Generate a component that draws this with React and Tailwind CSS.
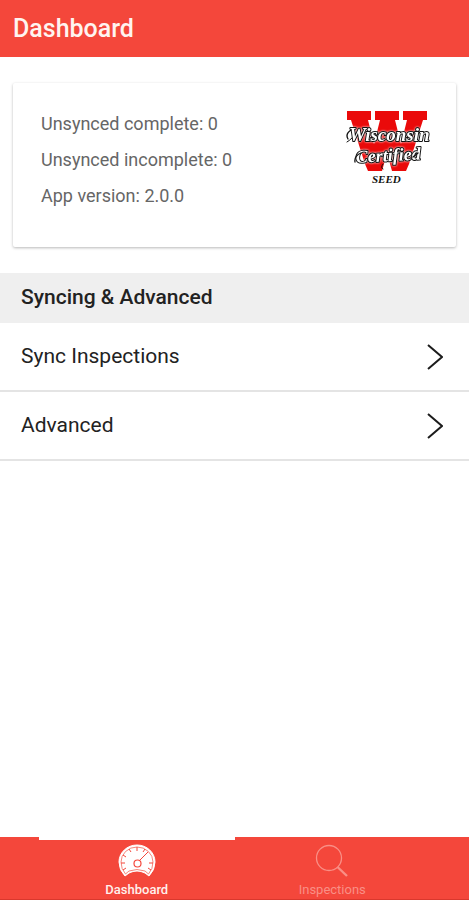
const stats = [
  { label: "Unsynced complete", value: "0" },
  { label: "Unsynced incomplete", value: "0" },
  { label: "App version", value: "2.0.0" },
];

const links = ["Sync Inspections", "Advanced"];

function SeedLogo() {
  return (
    <svg viewBox="0 0 88 76" className="w-[88px] h-[76px] shrink-0" role="img" aria-label="Wisconsin Certified Seed">
      <path
        fill="#ea0a0a"
        d="M2 0H26V9H23L29 33L35 9H30V0H54V9H50L56 33L62 9H58V0H82V9H78L64 53L61 60H47L42 42L37 60H23L20 53L6 9H2Z"
      />
      <g
        className="drop-shadow-[0_0_1px_white]"
        fontFamily="'Liberation Serif', serif"
        fontStyle="italic"
        fontWeight="bold"
        fill="#fff"
        stroke="#111"
        strokeWidth="2"
        strokeLinejoin="round"
        paintOrder="stroke"
      >
        <text x="4" y="30" fontSize="19">Wisconsin</text>
        <text x="11" y="52" fontSize="18" transform="rotate(-3 11 52)">Certified</text>
      </g>
      <g fill="none" strokeLinecap="round">
        <path d="M3 28Q0 23 6 19M10 51Q9 45 16 42M68 46L73 42" stroke="#111" strokeWidth="1.300" />
        <path d="M2 31Q4 30 7 27M38 53Q35 57 38 58" stroke="#111" strokeWidth="1" />
      </g>
      <text x="27" y="72" fontFamily="'Liberation Serif', serif" fontStyle="italic" fontWeight="bold" fontSize="11" fill="#111">
        SEED
      </text>
    </svg>
  );
}

function Chevron() {
  return (
    <svg viewBox="0 0 16 26" className="w-4 h-[26px]" fill="none" stroke="#1c1c1c" strokeWidth="2" aria-hidden="true">
      <path d="M1 1L15 13L1 25" />
    </svg>
  );
}

function GaugeIcon() {
  return (
    <svg viewBox="0 0 38 34" className="w-[38px] h-[34px]" fill="none" aria-hidden="true">
      <path d="M7 32Q1 26 1 18A18 17 0 0 1 37 18Q37 26 31 32L27 29Q19 25 11 29Z" fill="#fff" stroke="#fff" strokeWidth="1" strokeLinejoin="round" />
      <path d="M7.500 30Q3 25 3 18A16 15 0 0 1 35 18Q35 25 30.500 30L27 27Q19 24 11 27Z" stroke="#f3675b" strokeWidth="0.800" />
      <path d="M19 3V7M11 5L13 8M27 5L25 8M5 11L8 13M3 19H7M31 19H35M5 26L8 24M33 26L30 24M21 17L30 8" stroke="#f4473b" strokeWidth="1" />
      <circle cx="19.500" cy="19.500" r="3.500" stroke="#f4473b" strokeWidth="1.200" />
    </svg>
  );
}

function SearchIcon() {
  return (
    <svg viewBox="0 0 38 34" className="w-[38px] h-[34px]" fill="none" stroke="currentColor" aria-hidden="true">
      <circle cx="16" cy="14" r="12.500" strokeWidth="1.300" />
      <path d="M24.500 23L34 32" strokeWidth="2.400" />
    </svg>
  );
}

export default function App() {
  return (
    <div className="min-h-screen flex flex-col bg-white font-[Roboto,sans-serif] text-[#222]">
      <header className="h-[57px] flex items-center px-[13px] bg-[#f4473b]">
        <h1 className="text-[25px] font-medium text-[#fff4f0]">Dashboard</h1>
      </header>

      <main className="flex-1">
        <section className="mx-[13px] mt-[26px] h-[164px] pl-7 pr-[23px] pt-[23px] flex justify-between rounded-xs bg-white shadow-[0_1px_3px_rgba(0,0,0,0.28)]">
          <div>
            {stats.map((s) => (
              <p key={s.label} className="text-lg leading-9 text-[#666]">
                {s.label}: {s.value}
              </p>
            ))}
          </div>
          <div className="pt-[5px]">
            <SeedLogo />
          </div>
        </section>

        <h2 className="mt-[26px] h-[50px] px-[21px] flex items-center bg-[#efefef] text-[21px] font-medium">
          Syncing &amp; Advanced
        </h2>
        <ul>
          {links.map((name) => (
            <li key={name} className="border-b-2 border-[#e4e4e4]">
              <a href="#" className="h-[67px] pl-[21px] pr-[26px] flex items-center justify-between text-[21px]">
                {name}
                <Chevron />
              </a>
            </li>
          ))}
        </ul>
      </main>

      <nav className="h-[63px] px-[39px] grid grid-cols-2 bg-[#f4473b] border-b border-[#d9382d]">
        <button className="flex flex-col items-center gap-1 border-t-3 border-white pt-1 text-[#fff0ec]">
          <GaugeIcon />
          <span className="text-[13px] leading-4 font-medium">Dashboard</span>
        </button>
        <button className="flex flex-col items-center gap-1 border-t-3 border-transparent pt-1 text-[#f98f86]">
          <SearchIcon />
          <span className="text-[13px] leading-4">Inspections</span>
        </button>
      </nav>
    </div>
  );
}
